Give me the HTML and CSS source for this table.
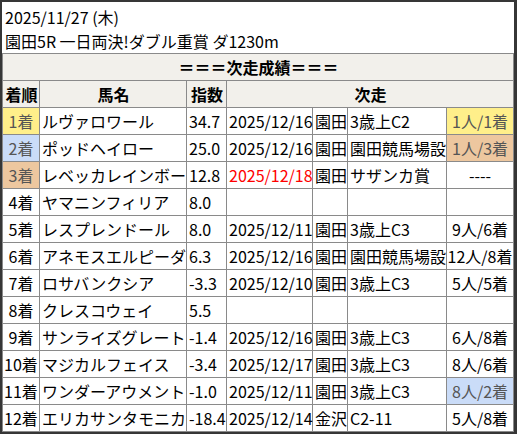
FILE: index.html
```html
<!DOCTYPE html>
<html lang="ja">
<head>
<meta charset="utf-8">
<link rel="stylesheet" href="styles.css">
</head>
<body>
<div class="frame">
  <div class="title">
    <div>2025/11/27 (木)</div>
    <div>園田5R 一日両決!ダブル重賞 ダ1230m</div>
  </div>
  <table class="results">
    <colgroup>
      <col class="c-rank"><col class="c-name"><col class="c-idx"><col class="c-date"><col class="c-track"><col class="c-race"><col class="c-res">
    </colgroup>
    <thead>
      <tr class="head"><th colspan="7">＝＝＝次走成績＝＝＝</th></tr>
      <tr class="head"><th>着順</th><th>馬名</th><th>指数</th><th colspan="4">次走</th></tr>
    </thead>
    <tbody>
      <tr><td class="rank gold">1着</td><td>ルヴァロワール</td><td>34.7</td><td>2025/12/16</td><td>園田</td><td>3歳上C2</td><td class="res gold">1人/1着</td></tr>
      <tr><td class="rank silver">2着</td><td>ポッドヘイロー</td><td>25.0</td><td>2025/12/16</td><td>園田</td><td>園田競馬場設</td><td class="res bronze">1人/3着</td></tr>
      <tr><td class="rank bronze">3着</td><td>レベッカレインボー</td><td>12.8</td><td class="future">2025/12/18</td><td>園田</td><td>サザンカ賞</td><td class="res">----</td></tr>
      <tr><td class="rank">4着</td><td>ヤマニンフィリア</td><td>8.0</td><td></td><td></td><td></td><td class="res"></td></tr>
      <tr><td class="rank">5着</td><td>レスプレンドール</td><td>8.0</td><td>2025/12/11</td><td>園田</td><td>3歳上C3</td><td class="res">9人/6着</td></tr>
      <tr><td class="rank">6着</td><td>アネモスエルピーダ</td><td>6.3</td><td>2025/12/16</td><td>園田</td><td>園田競馬場設</td><td class="res">12人/8着</td></tr>
      <tr><td class="rank">7着</td><td>ロサバンクシア</td><td>-3.3</td><td>2025/12/10</td><td>園田</td><td>3歳上C3</td><td class="res">5人/5着</td></tr>
      <tr><td class="rank">8着</td><td>クレスコウェイ</td><td>5.5</td><td></td><td></td><td></td><td class="res"></td></tr>
      <tr><td class="rank">9着</td><td>サンライズグレート</td><td>-1.4</td><td>2025/12/16</td><td>園田</td><td>3歳上C3</td><td class="res">6人/8着</td></tr>
      <tr><td class="rank">10着</td><td>マジカルフェイス</td><td>-3.4</td><td>2025/12/17</td><td>園田</td><td>3歳上C3</td><td class="res">8人/6着</td></tr>
      <tr><td class="rank">11着</td><td>ワンダーアウメント</td><td>-1.0</td><td>2025/12/11</td><td>園田</td><td>3歳上C3</td><td class="res silver">8人/2着</td></tr>
      <tr><td class="rank">12着</td><td>エリカサンタモニカ</td><td>-18.4</td><td>2025/12/14</td><td>金沢</td><td>C2-11</td><td class="res">5人/8着</td></tr>
    </tbody>
  </table>
</div>
</body>
</html>
```
FILE: styles.css
```css
html, body {
  margin: 0;
  padding: 0;
  background: #fff;
}
body {
  font-family: "Noto Sans CJK JP", "Noto Sans", sans-serif;
  font-size: 16px;
  color: #000;
}
.frame {
  width: 517px;
  height: 434px;
  box-sizing: border-box;
  border-style: solid;
  border-color: #363636;
  border-width: 2px 3px 2px 2px;
  background: #fff;
  overflow: hidden;
}
.title {
  padding: 3px 2px 0 3px;
  line-height: 24px;
  height: 48px;
}
.results {
  width: 512px;
  table-layout: fixed;
  border-collapse: collapse;
  border: 1px solid #8a8a8a;
}
.c-rank { width: 37px; }
.c-name { width: 147px; }
.c-idx { width: 40px; }
.c-date { width: 86px; }
.c-track { width: 35px; }
.c-race { width: 99px; }
.c-res { width: 67px; }
.results th,
.results td {
  border: 1px solid #8a8a8a;
  height: 26px;
  padding: 0 1px 0 2px;
  line-height: 26px;
  white-space: nowrap;
  text-align: left;
  font-weight: normal;
}
.results th {
  background: #f2f0eb;
  font-weight: bold;
  text-align: center;
}
.results td.rank,
.results td.res {
  text-align: center;
  padding: 0;
}
.gold { background: #ffef8a; color: #555; }
.silver { background: #cadcf8; color: #555; }
.bronze { background: #edc79f; color: #555; }
.future { color: #f00; }
```
